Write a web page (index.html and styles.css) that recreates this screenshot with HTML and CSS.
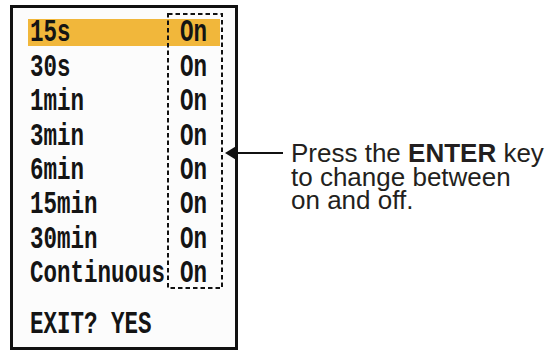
FILE: index.html
```html
<!DOCTYPE html>
<html>
<head>
<meta charset="utf-8">
<link rel="stylesheet" href="styles.css">
</head>
<body>
<div class="page">
  <div class="panel">
    <div class="rows">
      <div class="row sel"><span class="lbl"><span class="t">15s</span></span><span class="val"><span class="t">On</span></span></div>
      <div class="row"><span class="lbl"><span class="t">30s</span></span><span class="val"><span class="t">On</span></span></div>
      <div class="row"><span class="lbl"><span class="t">1min</span></span><span class="val"><span class="t">On</span></span></div>
      <div class="row"><span class="lbl"><span class="t">3min</span></span><span class="val"><span class="t">On</span></span></div>
      <div class="row"><span class="lbl"><span class="t">6min</span></span><span class="val"><span class="t">On</span></span></div>
      <div class="row"><span class="lbl"><span class="t">15min</span></span><span class="val"><span class="t">On</span></span></div>
      <div class="row"><span class="lbl"><span class="t">30min</span></span><span class="val"><span class="t">On</span></span></div>
      <div class="row"><span class="lbl"><span class="t">Continuous</span></span><span class="val"><span class="t">On</span></span></div>
    </div>
    <div class="exit"><span class="t">EXIT? YES</span></div>
    <svg class="dash" width="58" height="278" viewBox="0 0 58 278">
      <rect x="1" y="1" width="54" height="274" fill="none" stroke="#111" stroke-width="2" stroke-dasharray="4.5 3"/>
    </svg>
  </div>
  <div class="callout">
    <div class="line">Press the <b>ENTER</b> key</div>
    <div class="line">to change between</div>
    <div class="line">on and off.</div>
  </div>
  <svg class="arrow" width="62" height="20" viewBox="0 0 62 20">
    <polygon points="1,10 14,2 14,18" fill="#111"/>
    <line x1="13" y1="10" x2="59" y2="10" stroke="#111" stroke-width="2.2"/>
  </svg>
</div>
</body>
</html>
```

FILE: styles.css
```css
html, body {
  margin: 0;
  padding: 0;
  background: #ffffff;
}
.page {
  position: relative;
  width: 554px;
  height: 352px;
  display: flex;
  align-items: flex-start;
}
.panel {
  position: relative;
  box-sizing: border-box;
  margin-left: 10px;
  margin-top: 5px;
  width: 228px;
  height: 345px;
  border: 3px solid #111;
  background: #fcfcfc;
  font-family: "Liberation Mono", "DejaVu Sans Mono", monospace;
  font-weight: bold;
  font-size: 22.5px;
  color: #141414;
  display: flex;
  flex-direction: column;
}
.rows {
  margin-top: 8.3px;
  margin-left: 15px;
  width: 192px;
  display: flex;
  flex-direction: column;
}
.row {
  height: 34.36px;
  display: flex;
  align-items: center;
}
.sel {
  background: linear-gradient(to bottom, transparent 2.7px, #f1b73b 2.7px, #f1b73b 29.7px, transparent 29.7px);
}
.lbl {
  width: 150px;
  padding-left: 2px;
  display: flex;
  align-items: center;
}
.val {
  display: flex;
  align-items: center;
}
.t {
  display: inline-block;
  line-height: 22px;
  transform: scaleY(1.38);
  white-space: pre;
}
.exit {
  margin-top: 17px;
  margin-left: 17px;
  height: 34px;
  display: flex;
  align-items: center;
}
.dash {
  position: absolute;
  left: 154px;
  top: 5px;
}
.callout {
  margin-left: 53px;
  margin-top: 142px;
  font-family: "Liberation Sans", Arial, sans-serif;
  font-size: 26px;
  color: #231f20;
  white-space: nowrap;
  display: flex;
  flex-direction: column;
}
.line {
  height: 23.5px;
  line-height: 23.5px;
}
.callout b {
  font-weight: bold;
}
.arrow {
  position: absolute;
  left: 224px;
  top: 143px;
}
```
